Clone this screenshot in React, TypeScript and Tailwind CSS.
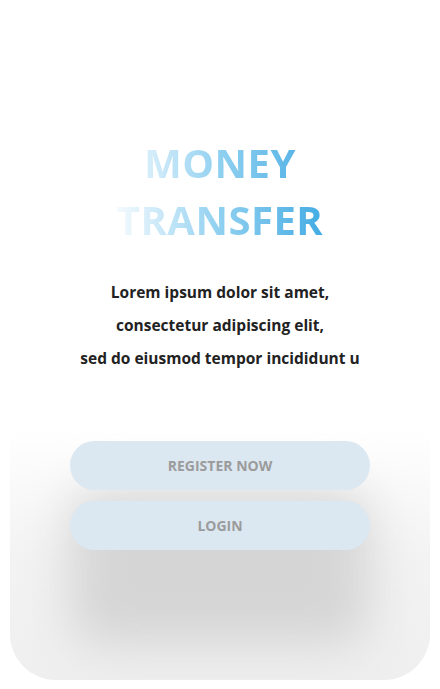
const lines = [
  "Lorem ipsum dolor sit amet,",
  "consectetur adipiscing elit,",
  "sed do eiusmod tempor incididunt u",
]

const actions = ["Register now", "Login"]

export default function App() {
  return (
    <div
      className="w-[440px] h-[689px] bg-white overflow-hidden flex flex-col items-center"
      style={{ fontFamily: '"Open Sans", "Noto Sans", sans-serif' }}
    >
      <div className="pt-[134px] flex flex-col items-center">
        <h1 className="inline-block text-center text-[40px] font-bold leading-[57px] tracking-[0.5px] bg-linear-to-r from-[#f4fafe] via-[#8fd0f0] to-[#42ace3] bg-clip-text text-transparent">
          MONEY
          <br />
          TRANSFER
        </h1>
      </div>

      <div className="mt-[28px] flex flex-col items-center text-[15.5px] font-bold leading-[33px] text-[#222] whitespace-nowrap">
        {lines.map((l) => (
          <p key={l}>{l}</p>
        ))}
      </div>

      <div className="mt-[26px] w-[420px] h-[279px] rounded-b-[46px] overflow-hidden bg-linear-to-b from-white from-10% via-[#f3f3f3] via-55% to-[#efefef] grid">
        <div className="[grid-area:1/1] flex justify-center pt-[90px]">
          <div className="w-[300px] h-[155px] rounded-[30px] bg-[#d5d5d5] blur-[24px]" />
        </div>
        <div className="[grid-area:1/1] relative z-10 flex flex-col items-center gap-[11px] pt-[40px]">
          {actions.map((a) => (
            <button
              key={a}
              className="w-[300px] h-[49px] rounded-full bg-[#dbe7f1] text-[14px] font-bold uppercase text-[#9b9b9b]"
            >
              {a}
            </button>
          ))}
        </div>
      </div>
    </div>
  )
}
